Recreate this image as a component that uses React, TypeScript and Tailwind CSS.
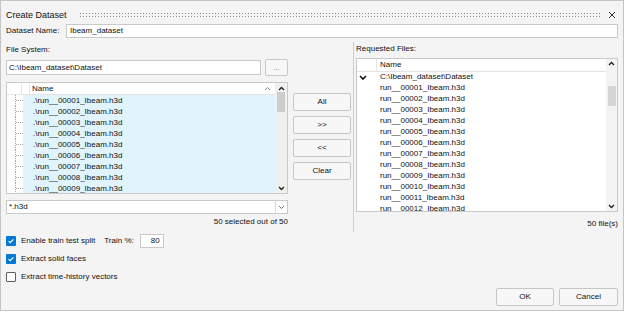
const leftFiles = Array.from({ length: 9 }, (_, i) => `.\\run__${String(i + 1).padStart(5, "0")}_Ibeam.h3d`)
const rightFiles = Array.from({ length: 12 }, (_, i) => `run__${String(i + 1).padStart(5, "0")}_Ibeam.h3d`)

const Up = ({ color = "#222", w = 1.4 }: { color?: string; w?: number }) => (
    <svg width="7" height="5" viewBox="0 0 7 5">
        <path d="M1 4 L3.5 1.5 L6 4" stroke={color} strokeWidth={w} fill="none" />
    </svg>
)

const Down = ({ color = "#222", w = 1.4 }: { color?: string; w?: number }) => (
    <svg width="7" height="5" viewBox="0 0 7 5">
        <path d="M1 1 L3.5 3.5 L6 1" stroke={color} strokeWidth={w} fill="none" />
    </svg>
)

const Check = ({ checked }: { checked: boolean }) =>
    checked ? (
        <span className="w-[10px] h-[10px] bg-[#0078d7] rounded-[1px] flex items-center justify-center">
            <svg width="8" height="8" viewBox="0 0 8 8">
                <path d="M1.6 4.1 L3.2 5.7 L6.4 2.3" stroke="white" strokeWidth="1.2" fill="none" />
            </svg>
        </span>
    ) : (
        <span className="w-[10px] h-[10px] bg-white border border-[#606060] rounded-[1px]" />
    )

const Btn = ({ label, className = "" }: { label: string; className?: string }) => (
    <div className={`h-[18px] flex items-center justify-center bg-[#f7f7f7] border border-[#c6c6c6] rounded-[2px] ${className}`}>
        {label}
    </div>
)

const App = () => {
    return (
        <div className="w-[624px] h-[313px] bg-white">
            <div className="w-[624px] h-[311px] flex flex-col bg-[#f4f4f4] border border-[#c4c4c4] pl-[5px] pr-[5px] pt-[5px] pb-[4px] font-['Liberation_Sans',Arial,sans-serif] text-[8px] text-[#111] leading-none">
                {/* title */}
                <div className="h-[18px] flex items-center">
                    <span className="text-[9px]">Create Dataset</span>
                    <div className="flex-1 h-[6px] ml-[12px] mr-[6px] bg-[radial-gradient(circle,#8f8f8f_0.7px,transparent_0.9px)] bg-[length:3px_3px]" />
                    <svg width="8" height="8" viewBox="0 0 8 8" className="mr-[2px]">
                        <path d="M1 1 L7 7 M7 1 L1 7" stroke="#333" strokeWidth="1" />
                    </svg>
                </div>

                {/* dataset name */}
                <div className="h-[14px] flex items-center">
                    <span className="w-[60px]">Dataset Name:</span>
                    <div className="flex-1 h-[14px] bg-white border border-[#c9c9c9] flex items-center pl-[3px]">Ibeam_dataset</div>
                </div>

                {/* main */}
                <div className="mt-[4px] h-[190px] flex">
                    {/* left column */}
                    <div className="w-[282px] flex flex-col">
                        <div className="h-[15px] flex items-center">File System:</div>
                        <div className="mt-[2px] h-[17px] flex items-center">
                            <div className="w-[255px] h-[15px] bg-white border border-[#c9c9c9] flex items-center pl-[2px]">C:\Ibeam_dataset\Dataset</div>
                            <div className="ml-[4px] w-[23px] h-[17px] bg-[#f7f7f7] border border-[#c9c9c9] rounded-[2px] flex items-center justify-center text-[#777] text-[7px]">...</div>
                        </div>

                        <div className="mt-[6px] h-[112px] border border-[#c9c9c9] bg-white flex overflow-hidden">
                            <div className="flex-1 flex flex-col min-w-0">
                                <div className="h-[12px] flex items-center border-b border-[#e4e4e4] shrink-0">
                                    <div className="w-[15px] h-full border-r border-[#e4e4e4]" />
                                    <div className="w-[8px] h-full border-r border-[#e4e4e4]" />
                                    <div className="flex-1 flex items-center justify-between pl-[2px] pr-[4px]">
                                        <span>Name</span>
                                        <Up color="#888" w={1} />
                                    </div>
                                </div>
                                {leftFiles.map((f) => (
                                    <div key={f} className="h-[11px] flex shrink-0">
                                        <svg width="16" height="11" viewBox="0 0 16 11">
                                            <path d="M8.5 0 V11 M9 5.5 H16" stroke="#a8a8a8" strokeWidth="1" strokeDasharray="1 1" />
                                        </svg>
                                        <div className="flex-1 bg-[#e1f4fc] flex items-center pl-[10px]">{f}</div>
                                    </div>
                                ))}
                            </div>
                            <div className="w-[12px] bg-[#f0f0f0] flex flex-col items-center">
                                <div className="h-[8px] flex items-end"><Up /></div>
                                <div className="mt-[1px] h-[20px] w-[8px] bg-[#cdcdcd]" />
                                <div className="flex-1" />
                                <div className="h-[10px] flex items-center"><Down /></div>
                            </div>
                        </div>

                        <div className="mt-[6px] h-[14px] bg-white border border-[#c9c9c9] flex">
                            <div className="flex-1 flex items-center pl-[2px]">*.h3d</div>
                            <div className="w-[12px] border-l border-[#dcdcdc] flex items-center justify-center"><Down color="#777" w={1} /></div>
                        </div>
                        <div className="h-[16px] flex items-center justify-end">50 selected out of 50</div>
                    </div>

                    {/* middle buttons */}
                    <div className="w-[65px] pt-[51px] pl-[5px] flex flex-col gap-[5px]">
                        <Btn label="All" className="w-[58px]" />
                        <Btn label=">>" className="w-[58px]" />
                        <Btn label="<<" className="w-[58px]" />
                        <Btn label="Clear" className="w-[58px]" />
                    </div>

                    {/* right column */}
                    <div className="flex-1 border-l border-[#cfcfcf] pl-[2px] flex flex-col">
                        <div className="h-[15px] flex items-center">Requested Files:</div>
                        <div className="mt-[1px] h-[155px] border border-[#c9c9c9] bg-white flex overflow-hidden">
                            <div className="flex-1 flex flex-col min-w-0">
                                <div className="h-[13px] flex items-center border-b border-[#e4e4e4] shrink-0">
                                    <div className="w-[20px] h-full border-r border-[#e4e4e4]" />
                                    <div className="pl-[3px]">Name</div>
                                </div>
                                <div className="h-[11px] flex items-center shrink-0">
                                    <div className="w-[23px] pl-[2px] flex items-center">
                                        <svg width="8" height="5" viewBox="0 0 8 5">
                                            <path d="M1 1 L4 4 L7 1" stroke="#111" strokeWidth="1.6" fill="none" />
                                        </svg>
                                    </div>
                                    <span>C:\Ibeam_dataset\Dataset</span>
                                </div>
                                {rightFiles.map((f) => (
                                    <div key={f} className="h-[11px] flex items-center shrink-0 pl-[23px]">{f}</div>
                                ))}
                            </div>
                            <div className="w-[11px] bg-[#f3f3f3] flex flex-col items-center">
                                <div className="h-[10px] flex items-center"><Up /></div>
                                <div className="mt-[17px] h-[20px] w-[8px] bg-[#d6d6d6]" />
                                <div className="flex-1" />
                                <div className="h-[10px] flex items-center"><Down /></div>
                            </div>
                        </div>
                        <div className="mt-[4px] h-[16px] flex items-center justify-end">50 file(s)</div>
                    </div>
                </div>

                {/* bottom */}
                <div className="flex-1 flex">
                    <div className="flex flex-col">
                        <div className="h-[18px] flex items-center">
                            <Check checked />
                            <span className="ml-[5px]">Enable train test split</span>
                            <span className="ml-[9px]">Train %:</span>
                            <div className="ml-[6px] w-[24px] h-[14px] bg-white border border-[#c9c9c9] flex items-center justify-end pr-[3px]">80</div>
                        </div>
                        <div className="h-[18px] flex items-center">
                            <Check checked />
                            <span className="ml-[5px]">Extract solid faces</span>
                        </div>
                        <div className="h-[18px] flex items-center">
                            <Check checked={false} />
                            <span className="ml-[5px]">Extract time-history vectors</span>
                        </div>
                    </div>
                    <div className="flex-1 flex items-end justify-end gap-[5px]">
                        <Btn label="OK" className="w-[58px] h-[17px]" />
                        <Btn label="Cancel" className="w-[59px] h-[17px]" />
                    </div>
                </div>
            </div>
        </div>
    )
}

export default App
